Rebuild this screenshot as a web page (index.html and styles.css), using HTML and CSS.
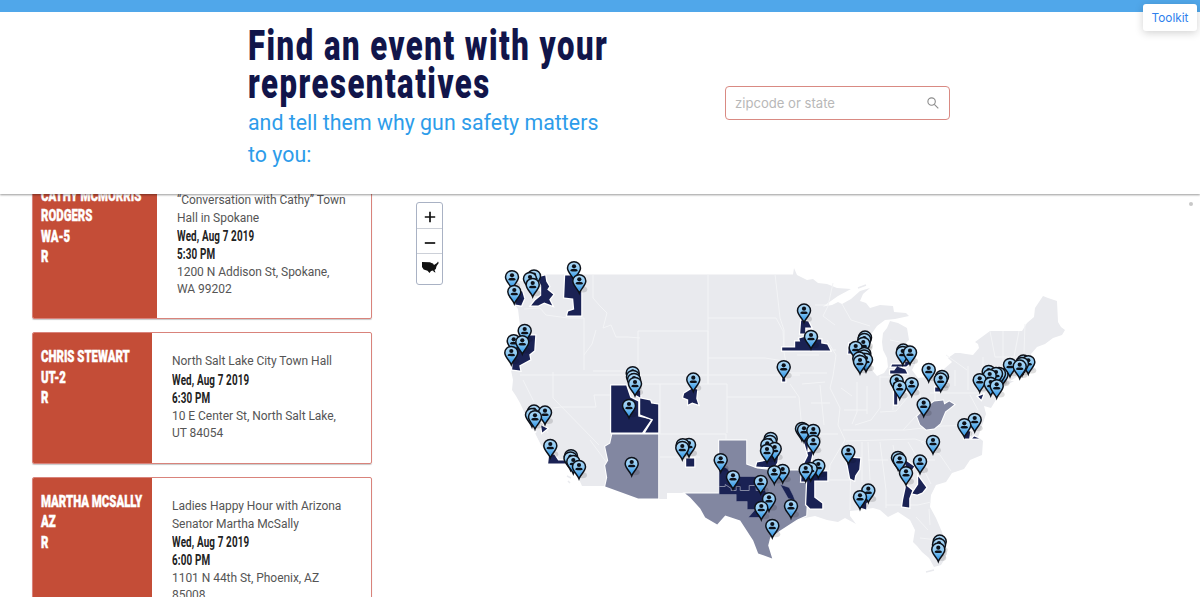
FILE: index.html
```html
<!DOCTYPE html>
<html lang="en">
<head>
<meta charset="utf-8">
<title>Find an event</title>
<link rel="stylesheet" href="styles.css">
</head>
<body>
<header class="header">
  <div class="intro">
    <h1 class="title"><span class="narrow line-a">Find an event with your</span><span class="narrow line-b">representatives</span></h1>
    <p class="subtitle">and tell them why gun safety matters to you:</p>
  </div>
  <label class="search">
    <input class="search-input" type="text" placeholder="zipcode or state">
    <svg class="search-icon" viewBox="0 0 12 12"><circle cx="4.6" cy="4.6" r="3.7"/><path d="M7.3 7.3L11.3 11.3"/></svg>
  </label>
  <a class="toolkit">Toolkit</a>
</header>
<main class="content">
  <section class="events">
    <article class="card card-first">
      <div class="rep rep-wide"><span class="narrow">CATHY MCMORRIS</span><span class="narrow">RODGERS</span><span class="narrow">WA-5</span><span class="narrow">R</span></div>
      <div class="details"><p>“Conversation with Cathy” Town<br>Hall in Spokane</p><p class="when"><span class="narrow">Wed, Aug 7 2019</span><span class="narrow">5:30 PM</span></p><p>1200 N Addison St, Spokane,<br>WA 99202</p></div>
    </article>
    <article class="card">
      <div class="rep"><span class="narrow">CHRIS STEWART</span><span class="narrow">UT-2</span><span class="narrow">R</span></div>
      <div class="details"><p>North Salt Lake City Town Hall</p><p class="when"><span class="narrow">Wed, Aug 7 2019</span><span class="narrow">6:30 PM</span></p><p>10 E Center St, North Salt Lake,<br>UT 84054</p></div>
    </article>
    <article class="card card-tall">
      <div class="rep"><span class="narrow">MARTHA MCSALLY</span><span class="narrow">AZ</span><span class="narrow">R</span></div>
      <div class="details"><p>Ladies Happy Hour with Arizona<br>Senator Martha McSally</p><p class="when"><span class="narrow">Wed, Aug 7 2019</span><span class="narrow">6:00 PM</span></p><p>1101 N 44th St, Phoenix, AZ<br>85008</p></div>
    </article>
  </section>
  <section class="map">
    <svg class="map-svg" viewBox="400 195 800 402">
      <defs>
        <linearGradient id="pinfill" x1="0" y1="0" x2="0" y2="1"><stop offset="0" stop-color="#b0d9f6"/><stop offset=".45" stop-color="#8ac8f3"/><stop offset=".75" stop-color="#4ba5ea"/></linearGradient>
        <g id="pin">
          <ellipse cx="3.500" cy="16" rx="4.500" ry="3" fill="#000" opacity=".13"/>
          <path d="M0 19.500C-1.500 15.200-6.500 12-6.500 7.500A6.500 6.400 0 0 1 6.500 7.500C6.500 12 1.500 15.200 0 19.500Z" fill="url(#pinfill)" stroke="#0d1119" stroke-width="1.500"/>
          <circle cy="5.700" r="2.100" fill="#0d1119"/>
          <path d="M-3.700 10.400C-3.500 8.300-1.500 8.500 0 8.500S3.500 8.300 3.700 10.400Q0 11.400-3.700 10.400Z" fill="#0d1119"/>
        </g>
      </defs>
      <path class="land" d="M507 275L515 279 524 282 529 275 537 274.500H793L794 268 797 275 807 280 813 279 818 283 827 284 837 288 851 289 838 296 823 306.500 832 305 838 302 842 304 851 299 860 291 870 288 863 294 860 301 866 303 870 308 880 305 893 306 894 312 906 313 909 316 895 319 885 320 877 326 870 336 868 347 870 360 872 370 877 376 884 373 888 367 887 358 883 350 882 342 883 333 887 328 890 321 898 323 907 328 909 340 903 346 910 344 916 356 915 364 912 370 918 378 926 377 935 374 944 369 952 362 948 358 955 353 960 353 966 354 973 355 979 348 978 344 975 342 990 331H1022L1027 323 1034 317 1035 308 1043 296 1048 298 1057 301 1058 322 1061 327 1065 330 1062 335 1053 338 1045 344 1037 347 1031 354 1029 363 1034 370 1022 374 1010 381 1014 381 998 390 997 398 991 408 984 406 986 414 982 426 978 437 983 441 982 455 970 460 964 469 952 473 946 482 936 485 931 495 930 507 936 518 942 532 945 543 946 557 941 565 934 567 929 558 922 552 917 546 913 542 915 530 910 520 898 512 888 517 880 510 873 508 860 510 850 511 850 516 856 524 845 518 838 522 827 520 815 516 800 519 780 530 770 537 768 545 772 558 758 553 753 540 740 520 725 515 717 524 705 517 700 508 690 497 685 493H667V499H638L605 486 582 486 578 477 570 466 557 463 548 452 541 445 535 433 530 426 527 418 520 403 516 396 512 390 513 380 511 370 513 350 520 326 518 309 513 302 510 291Z"/>
      <path class="islands" d="M567 476l4 2M568 481l2 2M858 288l8-3M926 572l8-2"/>
      <path class="county" d="M520 375H800M553 372V398L599 445M553 408L561 407H596L594 395H611M593 274V298L600 306 607 313 603 328 611 325 616 337H628L640 338M524 309L540 308 546 315 568 318H584V370M584 355L592 344 596 330M593 371L612 371H638V331H708V384H640V370M708 274V384H727V433M708 318H776L783 331 784 352M708 358H765L784 361M727 397H796M660 384V434M660 434H726V439M775 274L778 300 780 318 784 330V350H836M784 352L788 373H827M790 384L799 397 802 430M827 340L836 355 833 376 830 388 840 408 838 425 845 440 830 465 829 480H851M802 434H838M843 430H905L942 426 980 425M846 441L915 439 939 447M857 382V412L852 424M880 376V408L871 420 855 425M880 377H900L910 380M907 378V398L896 411 880 412M930 393L943 393H984M935 380V402M983 357V390M990 331L995 357H1019M1003 331V365M1019 331L1014 357M1025 324L1024 353M970 395L978 410M880 442L886 490V508M851 455L850 510M886 505H918L931 502M908 442L921 464 931 484M921 442L940 455 951 471M862 442V482M805 480L829 481M833 283L828 306 823 316 835 325M842 304L851 320 870 326M890 340L900 342M815 305H828M797 355H819M802 384L825 382M811 403H830M820 385L824 425M841 388L852 396M844 410H867M867 386V414M893 380V410M917 380L921 399M868 442L870 480M893 445L897 466M915 460H935M868 460H888M903 430L916 416 938 413M955 370V386M968 366V390M946 355L967 370M916 517L928 530M920 538L938 540M929 551L944 550M929 509L930 525M660 457H700M682 438V456M625 457V438M590 440L607 463M536 412L548 433M523 380L534 402"/>
      <g class="state"><path d="M612 434H658V498H638L605 486 607 477 605 465 608 460 605 446 610 443Z"/><path d="M719 440H746V464L757 468 774 470 798 470 805 476 807 495 806 515 797 519 780 530 770 537 768 545 772 558 758 553 753 540 740 520 725 515 717 524 705 517 700 508 690 497 685 493H719Z"/><path d="M934 401L943 400 944 404 949 401 954 404 949 408 945 411 940 423 934 428 926 429 920 424 917 416 922 411 927 406Z"/></g>
      <g class="district">
        <path d="M565 275H581V315H567L568 311 574 309 573 298 564 297Z"/><path d="M537 277L545 275 546 281 549 286 547 289 553 294 549 299 552 305 544 302 538 305H531L535 300 541 295 541 285Z"/><path d="M517 290L522 291 524 298 521 305 515 304Z"/><path d="M523 335L535 335 534 350 529 354 530 359 519 365 520 370 512 369 513 354Z"/>
        <path d="M611 385H626L630 397 638 401V416L651 419 642 432H611Z"/><path d="M634 390H640V398L650 400 651 403 658 404V432H645L653 419 640 414V397L633 393Z"/><path d="M684 393L692 388 697 389 696 398 698 404 692 402 688 404V399L683 397Z"/>
        <path d="M549 454L554 454 558 460 565 460V463H548Z"/><path d="M541 425L547 428 542 432ZM532 430L536 432"/><path d="M686 458H694V466H686Z"/>
        <path d="M795 341H800L799 338 806 336 811 339 821 339V343L827 344 830 350H782V347H795Z"/><path d="M801 320L808 321 811 327H805V333H800Z"/><path d="M849 343H861L860 353H848Z"/><path d="M892 364H905V361L911 362 906 366H891ZM894 370L897 366 905 369 907 373H890V370ZM894 377H897V404H894ZM782 378H785V381H782Z"/>
        <path d="M762 445H777L778 454 777 462 774 467 756 466 757 462 767 460Z"/>
        <path d="M802 435L808 440 807 452 813 450 808 471H827V480H814L814 497 822 503 822 508H810L806 504 807 481H801L802 467 808 455Z"/>
        <path d="M846 457L860 458 859 469 855 475 854 480 850 478Z"/><path d="M918 476L926 487 922 492 917 494 912 493 918 484Z"/><path d="M906 485L912 490 909 498V507L902 506 903 499Z"/><path d="M904 459L914 466 908 475ZM858 499H870L866 503V509L860 507ZM964 430L970 431 969 438H964ZM974 436L979 438H972ZM978 396L983 394 981 399ZM935 387H940V391H935Z"/>
      </g>
      <g class="district-inner">
        <path d="M719 464L727 468 733 476H765V490L768 497 763 503 762 517H748L755 509H747V501H736V494H719Z"/><path d="M780 484L789 487 793 495 795 500 788 498Z"/>
      </g>
      <path class="cuts cuts-inner" d="M719 486H725V484L731 488V490H736V486H740V490H749V485H756V490H764"/>
      <g id="pins"></g>
    </svg>
    <div class="controls">
      <button class="control"><svg viewBox="0 0 12 12"><path d="M6 .8V11.200M.8 6H11.200"/></svg></button>
      <button class="control"><svg viewBox="0 0 12 12"><path d="M.8 6H11.200"/></svg></button>
      <button class="control control-us"><svg class="us" viewBox="0 0 18 12"><path d="M1 1L9 1.200 10.500 2 12 2.600 13 4 16 2 17 .5 17.700 2 15.600 5 14.800 8 13.500 9 14.500 11.500 13 11 12 9.500 10 10 8.500 12 6.500 9.800 2.700 8.500 1 6Z"/></svg></button>
    </div>
    <i class="dot"></i>
  </section>
</main>
<script src="pins.js"></script>
</body>
</html>
```

FILE: pins.js
```javascript
// Marker positions: horizontal centre and top of each pin.
const events = [
  [574,260.300],[534,268.500],[512,269.300],[530,271],[579.300,273.300],[532.700,277],[514.300,284],
  [804,302.700],[524.700,323],[811,329],[865,329.700],[864.300,332],[513.700,333.300],[522.300,334.300],[863.300,336],[855.700,340],
  [903.300,342.700],[902.700,345],[910,344.700],[511.300,345],[864.300,346],[864,348.500],[866,352],[859.300,350.700],[860,354],
  [1023.300,353.700],[1028.300,354.300],[1022,356],[1010,357],[1019.700,358.700],[783.700,359.300],[928.700,362],
  [988.700,364],[1001.500,367],[999,366],[996,366],[989.700,368],[979.700,372.300],[990.700,376],[996.700,378.300],
  [632.700,365.300],[633,369],[634,372],[635,376],[942,369],[940.700,371.700],[693.300,371.700],
  [896.700,373.300],[911.700,376.300],[899.700,379.300],[923.700,396.700],[629,398],
  [534,403.700],[545,404.700],[532,407],[535,409.300],[974.700,412],[964.300,417.300],
  [802,421],[804,422.300],[813.300,423],[770.700,431],[770,434],[767.300,437.300],[813.300,434],[933,434],
  [689,437],[682.700,437.300],[682.300,440],[550.300,438],[774.700,441],[767,443],[848.300,444],
  [571,448.300],[570.500,450.500],[573.300,454],[579,459],[898,450],[899.700,452.300],[720.700,452.300],[920,453.700],[631.700,456],
  [818.300,458],[810.700,461],[805.700,462],[782.700,463],[774.300,464.300],[906,465.300],[733,469.300],[760.700,474],
  [868.300,482.700],[860,489.300],[769,491.300],[791,498.300],[761.300,500],[772.300,518],[939.700,533.700],[939,537],[938.300,541.700]
];
document.getElementById('pins').innerHTML =
  events.map(([x, y]) => `<use href="#pin" x="${x}" y="${y + 0.3}"/>`).join('');
```

FILE: styles.css
```css
* { box-sizing: border-box; }
body { margin: 0; height: 597px; overflow: hidden; background: #fff; font-family: Roboto, sans-serif; display: flex; flex-direction: column; }
.header { position: relative; z-index: 2; flex: none; height: 194px; border-top: 12px solid #50a7ea; background: #fff; box-shadow: 0 1px 2px rgba(0,0,0,.4); display: flex; padding-left: 248px; }
.intro { width: 360px; margin-right: 117px; padding-top: 15px; }
.title { margin: 0; color: #11154a; font-size: 42px; line-height: 37.500px; font-weight: 900; letter-spacing: 2.050px; white-space: nowrap; }
.narrow { display: block; width: max-content; transform-origin: 0 50%; transform: scaleX(.74); }
.subtitle { margin: 5px 0 0; color: #2d9cea; font-size: 21.300px; line-height: 31.800px; letter-spacing: .03px; }
.search { width: 225px; height: 34px; margin-top: 74px; border: 1px solid #d98a83; border-radius: 4px; display: flex; align-items: center; padding: 0 10px 0 9px; }
.search-input { flex: 1; min-width: 0; padding: 0; border: 0; outline: 0; font: 13.100px Inter, sans-serif; color: #555; }
.search-input::placeholder { color: #b8b8b8; opacity: 1; }
.search-icon { width: 12px; height: 12px; fill: none; stroke: #8b8b8b; stroke-width: 1.100; }
.toolkit { position: absolute; top: -8px; right: 3px; width: 54px; height: 27px; background: #fff; border-radius: 3px; box-shadow: 0 2px 8px rgba(0,0,0,.18); color: #2f80ed; font: 11.800px/28px Inter, sans-serif; text-align: center; }
.content { flex: 1; min-height: 0; display: flex; }
.events { width: 400px; padding-left: 32px; overflow: hidden; display: flex; flex-direction: column; gap: 13px; }
.card { flex: none; display: flex; width: 340px; height: 131.500px; border: 1px solid #d9837b; border-radius: 2px; box-shadow: 0 1px 1px rgba(0,0,0,.22); overflow: hidden; }
.card-first { margin-top: -23.500px; height: 148.500px; }
.card-tall { height: 149px; }
.rep { flex: none; width: 119px; background: #c44d37; color: #fff; padding: 14.400px 8px; font-size: 16.500px; line-height: 20.400px; font-weight: 900; -webkit-text-stroke: .4px #fff; }
.rep-wide { width: 124px; }
.rep .narrow { transform: scaleX(.69); }
.details { padding: 20.400px 0 0 20px; color: #555; font-size: 12px; line-height: 17.700px; letter-spacing: -.04px; white-space: nowrap; }
.details p { margin: 0; }
.details .when { color: #222; font-size: 14px; font-weight: 700; letter-spacing: .2px; padding-top: 1px; }
.when .narrow { transform: scaleX(.705); }
.map { position: relative; flex: 1; padding-top: 1px; }
.map-svg { display: block; width: 800px; height: 402px; }
.land { fill: #e9eaee; }
.islands { fill: none; stroke: #e9eaee; stroke-width: 1.500; }
.county { fill: none; stroke: #f3f4f6; stroke-width: 1; }
.state, .district, .district-inner, .cuts { transform: translate(.2px, .5px); }
.state path { fill: #8287a1; stroke: #fff; stroke-width: 2; }
.state path, .district path { paint-order: stroke; }
.district path { fill: #1a2254; stroke: #fff; stroke-width: 2.500; }
.district-inner { fill: #1a2254; stroke: #9296ae; stroke-width: .5; }
.cuts { fill: none; stroke: #8f93ab; stroke-width: .9; }
.controls { position: absolute; left: 16px; top: 8px; width: 27px; height: 83px; background: #fff; border: 1px solid #a9b2c4; border-radius: 3px; display: flex; flex-direction: column; }
.control { flex: none; height: 25.500px; border: 0; border-bottom: 1px solid #ccd0d8; padding: 4px 0 0; background: none; display: flex; justify-content: center; align-items: center; }
.control svg { width: 12px; height: 12px; fill: none; stroke: #111; stroke-width: 1.700; }
.control-us { border: 0; padding: 0; }
.control .us { width: 18px; height: 12px; fill: #111; stroke: none; }
.dot { position: absolute; right: 7px; top: 8px; width: 4px; height: 4px; border-radius: 50%; background: #c8c8c8; }
```
